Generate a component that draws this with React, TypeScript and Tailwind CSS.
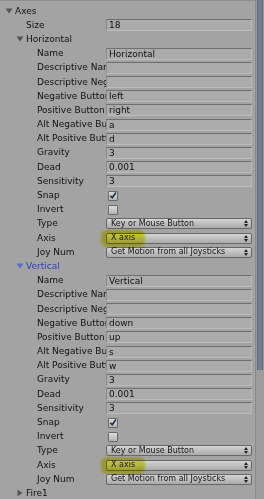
import React from 'react';

type Field =
  | { label: string; kind: 'text'; value: string }
  | { label: string; kind: 'check'; checked: boolean }
  | { label: string; kind: 'select'; value: string; mark?: boolean };

const axisFields = (name: string, neg: string, pos: string, altNeg: string, altPos: string): Field[] => [
  { label: 'Name', kind: 'text', value: name },
  { label: 'Descriptive Name', kind: 'text', value: '' },
  { label: 'Descriptive Negative Name', kind: 'text', value: '' },
  { label: 'Negative Button', kind: 'text', value: neg },
  { label: 'Positive Button', kind: 'text', value: pos },
  { label: 'Alt Negative Button', kind: 'text', value: altNeg },
  { label: 'Alt Positive Button', kind: 'text', value: altPos },
  { label: 'Gravity', kind: 'text', value: '3' },
  { label: 'Dead', kind: 'text', value: '0.001' },
  { label: 'Sensitivity', kind: 'text', value: '3' },
  { label: 'Snap', kind: 'check', checked: true },
  { label: 'Invert', kind: 'check', checked: false },
  { label: 'Type', kind: 'select', value: 'Key or Mouse Button' },
  { label: 'Axis', kind: 'select', value: 'X axis', mark: true },
  { label: 'Joy Num', kind: 'select', value: 'Get Motion from all Joysticks' },
];

const Arrow = ({ open, color = '#4d4d4d' }: { open: boolean; color?: string }) => (
  <svg width="8" height="8" viewBox="0 0 8 8" className="shrink-0">
    {open ? <path d="M0.5 1.5 L7.5 1.5 L4 6.5 Z" fill={color} /> : <path d="M1.5 0.5 L6.5 4 L1.5 7.5 Z" fill={color} />}
  </svg>
);

const Foldout = ({ text, indent, open, blue }: { text: string; indent: number; open: boolean; blue?: boolean }) => (
  <div className="h-[14.2px] flex items-center gap-[2px]" style={{ paddingLeft: indent }}>
    <Arrow open={open} color={blue ? '#5a6bc8' : '#555555'} />
    <span className={blue ? 'text-[#2e3fb8]' : 'text-[#111111]'}>{text}</span>
  </div>
);

const TextBox = ({ value }: { value: string }) => (
  <div className="h-[12px] bg-[#ababab] border-t border-t-[#6e6e6e] border-l border-l-[#8c8c8c] border-r border-r-[#b9b9b9] border-b border-b-[#bdbdbd] pl-[2px] text-[9px] leading-[11px] text-[#111111] overflow-hidden whitespace-nowrap">
    {value}
  </div>
);

const Select = ({ value, mark }: { value: string; mark?: boolean }) => (
  <div className="relative h-[11px] rounded-[2px] border border-[#686868] bg-gradient-to-b from-[#d4d4d4] to-[#aaaaaa] flex items-center justify-between pl-[4px] pr-[3px] text-[8px] leading-[10px] text-[#151515] whitespace-nowrap">
    {mark && (
      <div className="absolute left-[-6px] top-[-4px] w-[44px] h-[17px] rounded-[6px] bg-[#eaea1c] opacity-80 blur-[1px] mix-blend-multiply" />
    )}
    <span className="relative">{value}</span>
    <svg width="4" height="7" viewBox="0 0 4 7" className="relative shrink-0">
      <path d="M0 3 L2 0 L4 3 Z M0 4 L2 7 L4 4 Z" fill="#222222" />
    </svg>
  </div>
);

const Check = ({ checked }: { checked: boolean }) => (
  <div className="ml-[2px] w-[10px] h-[10px] rounded-[1px] border border-[#6a6a6a] bg-gradient-to-b from-[#dcdcdc] to-[#b4b4b4] flex items-center justify-center">
    {checked && (
      <svg width="9" height="9" viewBox="0 0 9 9">
        <path d="M1.5 4.8 L3.6 7 L7.8 1.2" stroke="#1c2b4c" strokeWidth="1.8" fill="none" />
      </svg>
    )}
  </div>
);

const FieldRow = ({ f, indent }: { f: Field; indent: number }) => (
  <div className="h-[14.2px] flex items-center">
    <div className="w-[106px] shrink-0 overflow-hidden whitespace-nowrap text-[#111111]" style={{ paddingLeft: indent }}>
      {f.label}
    </div>
    <div className="flex-1 mr-[3px]">
      {f.kind === 'text' && <TextBox value={f.value} />}
      {f.kind === 'check' && <Check checked={f.checked} />}
      {f.kind === 'select' && <Select value={f.value} mark={f.mark} />}
    </div>
  </div>
);

const App: React.FC = () => {
  const horizontal = axisFields('Horizontal', 'left', 'right', 'a', 'd');
  const vertical = axisFields('Vertical', 'down', 'up', 's', 'w');

  return (
    <div className="w-[264px] h-[499px] overflow-hidden flex bg-[#a3a3a3] font-['DejaVu_Sans',sans-serif] text-[9px] leading-[11px]">
      <div className="flex-1 border-t border-t-[#8e8e8e] pt-[3px]">
        <Foldout text="Axes" indent={5} open />
        <FieldRow f={{ label: 'Size', kind: 'text', value: '18' }} indent={26} />
        <Foldout text="Horizontal" indent={16} open />
        {horizontal.map((f) => (
          <FieldRow key={'h' + f.label} f={f} indent={37} />
        ))}
        <Foldout text="Vertical" indent={16} open blue />
        {vertical.map((f) => (
          <FieldRow key={'v' + f.label} f={f} indent={37} />
        ))}
        <Foldout text="Fire1" indent={16} open={false} />
      </div>
      <div className="w-[9px] shrink-0 bg-[#9c9c9c] border-l border-l-[#8a8a8a] flex flex-col">
        <div className="h-[370px] mx-[1px] bg-[#6f7d95] border-x border-x-[#5f6c83]" />
      </div>
    </div>
  );
};

export default App;
